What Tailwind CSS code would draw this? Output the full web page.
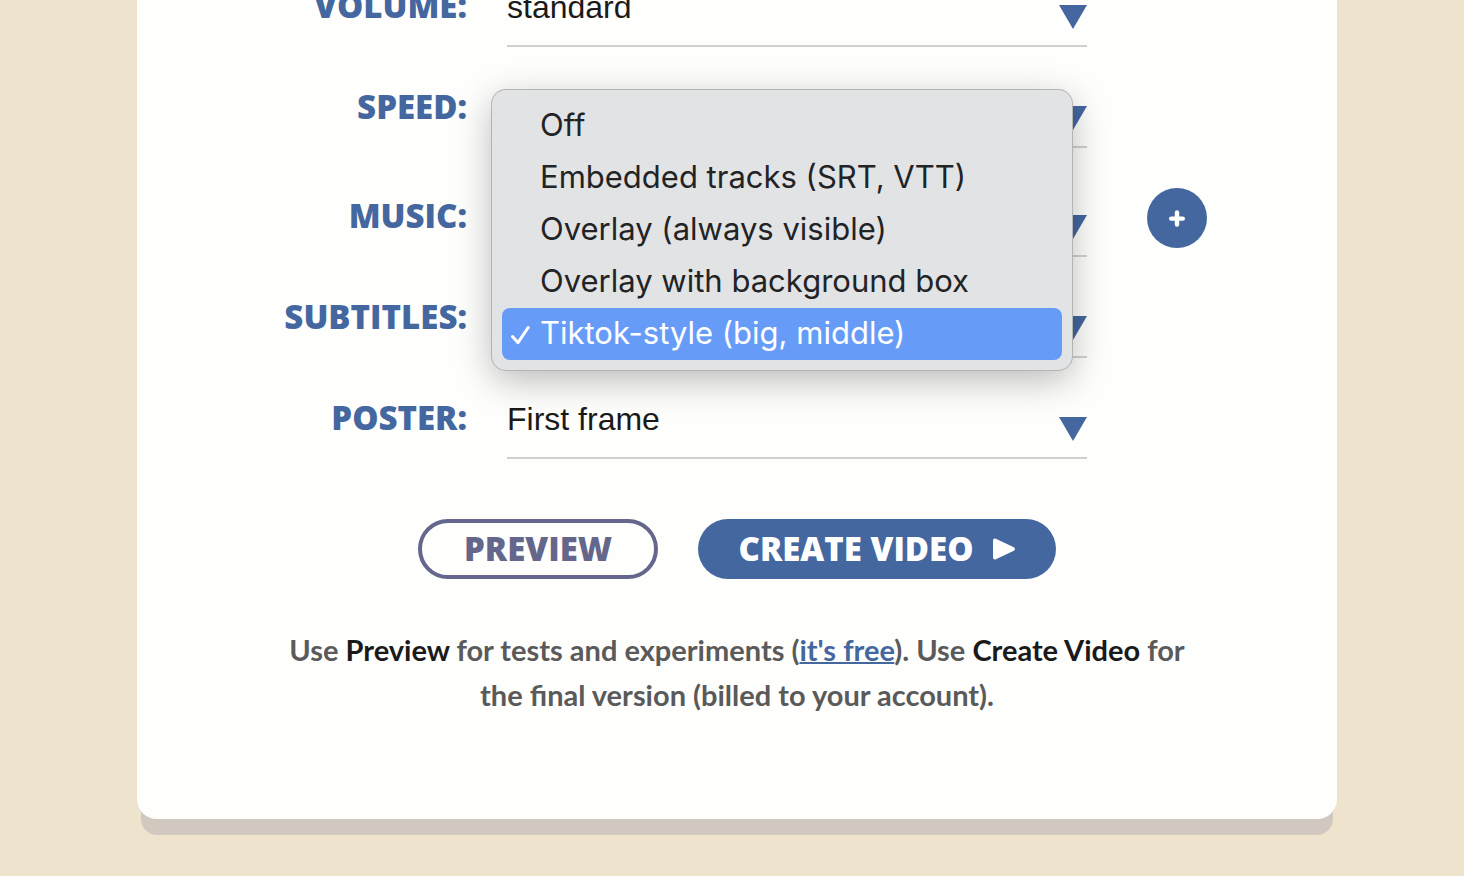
<!DOCTYPE html>
<html lang="en">
<head>
  <meta charset="UTF-8" />
  <meta name="viewport" content="width=device-width, initial-scale=1.0"/>
  <title>Create Video</title>
  <script src="https://cdn.jsdelivr.net/npm/@tailwindcss/browser@4"></script>
</head>
<body class="bg-[#eee3cd] min-h-screen pl-[10px] overflow-x-hidden">

  <main class="max-w-[1200px] mx-auto bg-[#fefefd] rounded-b-[20px] shadow-[0_20px_0_-4px_#d1c9c0] pb-[102px] flow-root">
    <form class="-mt-[14px] font-['Open_Sans',sans-serif]">
      <div class="space-y-10">

        <div class="flex items-end">
          <label for="volume" class="w-[330px] h-[61px] shrink-0 text-right text-[33px] leading-[40px] font-extrabold text-[#4467a0]">VOLUME:</label>
          <div class="relative ml-10 flex-1 max-w-[580px]">
            <select id="volume" class="block w-full h-[61px] pb-[17px] appearance-none bg-transparent border-b-2 border-[#d4d0d0] text-[32px] leading-[42px] text-[#1a1a1a] font-['Liberation_Sans',sans-serif]">
              <option>standard</option>
            </select>
            <svg class="absolute right-0 top-[19px] w-7 h-6 pointer-events-none" viewBox="0 0 28 24" fill="#4467a0"><path d="M0 0h28L14 24z"/></svg>
          </div>
        </div>

        <div class="flex items-end">
          <label for="speed" class="w-[330px] h-[61px] shrink-0 text-right text-[33px] leading-[40px] font-extrabold text-[#4467a0]">SPEED:</label>
          <div class="relative ml-10 flex-1 max-w-[580px]">
            <select id="speed" class="block w-full h-[61px] pb-[17px] appearance-none bg-transparent border-b-2 border-[#d4d0d0] text-[32px] leading-[42px] text-[#1a1a1a] font-['Liberation_Sans',sans-serif]">
              <option></option>
            </select>
            <svg class="absolute right-0 top-[19px] w-7 h-6 pointer-events-none" viewBox="0 0 28 24" fill="#4467a0"><path d="M0 0h28L14 24z"/></svg>
          </div>
        </div>

        <div class="flex items-end">
          <label for="music" class="w-[330px] h-[61px] shrink-0 text-right text-[33px] leading-[40px] font-extrabold text-[#4467a0]">MUSIC:</label>
          <div class="relative ml-10 flex-1 max-w-[580px]">
            <select id="music" class="block w-full h-[61px] pb-[17px] appearance-none bg-transparent border-b-2 border-[#d4d0d0] text-[32px] leading-[42px] text-[#1a1a1a] font-['Liberation_Sans',sans-serif]">
              <option></option>
            </select>
            <svg class="absolute right-0 top-[19px] w-7 h-6 pointer-events-none" viewBox="0 0 28 24" fill="#4467a0"><path d="M0 0h28L14 24z"/></svg>
          </div>
          <button type="button" aria-label="Add music" class="ml-[60px] mb-[9px] size-[60px] shrink-0 rounded-full bg-[#4467a0] flex items-center justify-center">
            <svg class="size-5" viewBox="0 0 20 20" fill="none" stroke="#fff" stroke-width="4.400" stroke-linecap="round"><path d="M10 4.500v12M4.200 10.600h11.600"/></svg>
          </button>
        </div>

        <div class="flex items-end">
          <label for="subtitles" class="w-[330px] h-[61px] shrink-0 text-right text-[33px] leading-[40px] font-extrabold text-[#4467a0]">SUBTITLES:</label>
          <div class="relative ml-10 flex-1 max-w-[580px]">
            <select id="subtitles" class="block w-full h-[61px] pb-[17px] appearance-none bg-transparent border-b-2 border-[#d4d0d0] text-[32px] leading-[42px] text-[#1a1a1a] font-['Liberation_Sans',sans-serif]">
              <option></option>
            </select>
            <svg class="absolute right-0 top-[19px] w-7 h-6 pointer-events-none" viewBox="0 0 28 24" fill="#4467a0"><path d="M0 0h28L14 24z"/></svg>

            <!-- Open menu -->
            <ul role="listbox" aria-label="Subtitles" class="absolute z-10 -left-[15px] -bottom-3 w-full p-[10px] rounded-[14px] bg-[#e2e3e5] shadow-[0_0_0_1px_#b4b4b4,0_10px_36px_rgba(0,0,0,0.28)] font-['Inter',sans-serif] text-[31px] leading-[50px] text-[#222324] whitespace-nowrap">
              <li role="option" class="h-[52px] pl-[38px]">Off</li>
              <li role="option" class="h-[52px] pl-[38px]">Embedded tracks (SRT, VTT)</li>
              <li role="option" class="h-[52px] pl-[38px]">Overlay (always visible)</li>
              <li role="option" class="h-[52px] pl-[38px]">Overlay with background box</li>
              <li role="option" aria-selected="true" class="relative h-[52px] pl-[38px] rounded-lg bg-[#669cf8] text-white">
                <svg class="absolute left-2 top-4 w-5 h-6" viewBox="0 0 20 24" fill="none" stroke="#fff" stroke-width="3" stroke-linecap="round" stroke-linejoin="round"><path d="M2.500 12.500L8 18.700 18.200 3.500"/></svg>
                Tiktok-style (big, middle)
              </li>
            </ul>
          </div>
        </div>

        <div class="flex items-end">
          <label for="poster" class="w-[330px] h-[61px] shrink-0 text-right text-[33px] leading-[40px] font-extrabold text-[#4467a0]">POSTER:</label>
          <div class="relative ml-10 flex-1 max-w-[580px]">
            <select id="poster" class="block w-full h-[61px] pb-[17px] appearance-none bg-transparent border-b-2 border-[#d4d0d0] text-[32px] leading-[42px] text-[#1a1a1a] font-['Liberation_Sans',sans-serif]">
              <option>First frame</option>
            </select>
            <svg class="absolute right-0 top-[19px] w-7 h-6 pointer-events-none" viewBox="0 0 28 24" fill="#4467a0"><path d="M0 0h28L14 24z"/></svg>
          </div>
        </div>

      </div>

      <div class="mt-[60px] flex justify-center gap-10 text-[33px] font-extrabold">
        <button type="button" class="w-60 h-[60px] flex items-center justify-center rounded-full border-4 border-[#64678b] text-[#64678b]">PREVIEW</button>
        <button type="submit" class="w-[358px] h-[60px] rounded-full bg-[#4467a0] text-white flex items-center justify-center gap-[18px]">
          CREATE VIDEO
          <svg class="w-6 h-6" viewBox="0 0 24 24" fill="#fff" stroke="#fff" stroke-width="4" stroke-linejoin="round"><path d="M3 3.500v17L21 12z"/></svg>
        </button>
      </div>

      <p class="mt-12 mx-auto max-w-[920px] text-center font-['Lato',sans-serif] text-[29px] leading-[45px] font-bold text-[#5a5a5a]">
        Use <strong class="font-bold text-[#1a1a1a]">Preview</strong> for tests and experiments (<a href="#" class="text-[#4467a0] underline decoration-2">it's free</a>). Use <strong class="font-bold text-[#1a1a1a]">Create Video</strong> for the final version (billed to your account).
      </p>
    </form>
  </main>

</body>
</html>
